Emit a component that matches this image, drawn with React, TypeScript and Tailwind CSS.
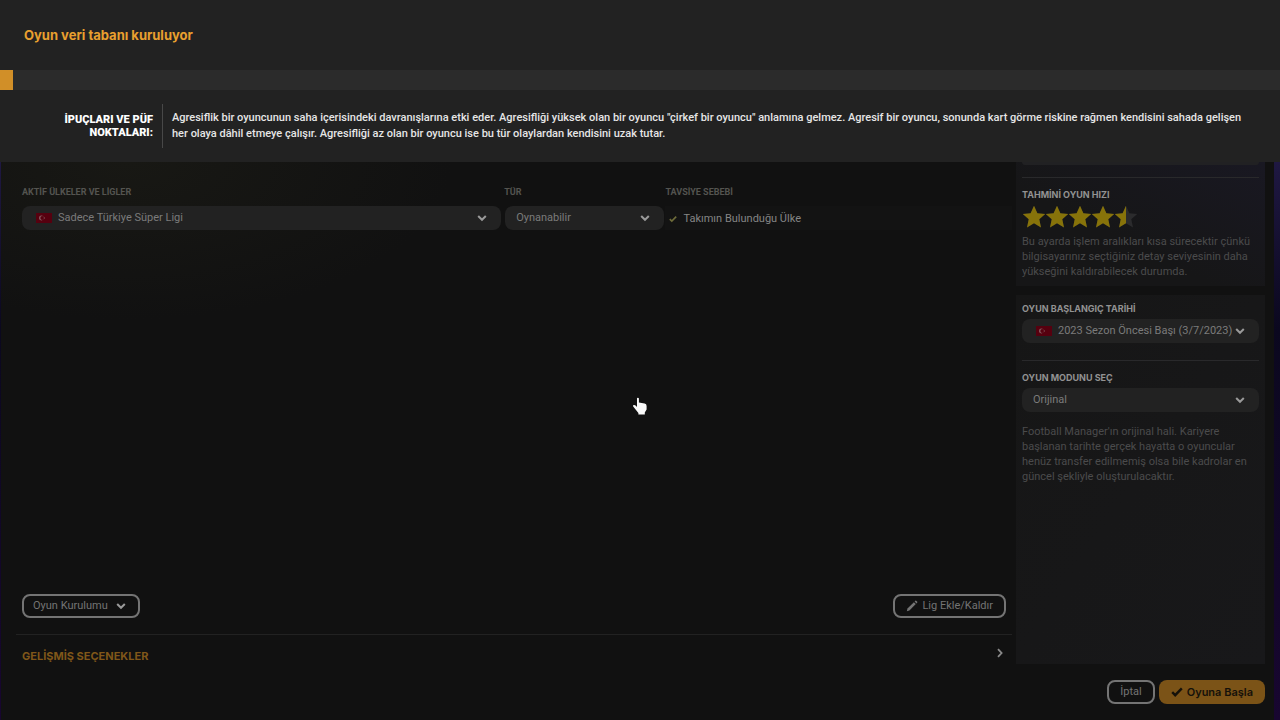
import React from 'react';
import { clsx } from 'clsx';

interface IconProps {
  className?: string;
}

const ChevronDown: React.FC<IconProps> = ({ className }) => (
  <svg viewBox="0 0 10 8" className={clsx('w-2.5 h-2 shrink-0', className)} fill="none" stroke="currentColor" strokeWidth="2">
    <path d="M1.2 2 5 5.8 8.8 2" />
  </svg>
);

const ChevronRight: React.FC<IconProps> = ({ className }) => (
  <svg viewBox="0 0 8 10" className={clsx('w-2 h-2.5 shrink-0', className)} fill="none" stroke="currentColor" strokeWidth="1.8">
    <path d="M2 1.2 5.6 5 2 8.8" />
  </svg>
);

const Tick: React.FC<IconProps> = ({ className }) => (
  <svg viewBox="0 0 12 10" className={clsx('shrink-0', className)} fill="none" stroke="currentColor" strokeWidth="2.4">
    <path d="M1.2 5.2 4.2 8.2 10.8 1.4" />
  </svg>
);

const Pencil: React.FC<IconProps> = ({ className }) => (
  <svg viewBox="0 0 12 12" className={clsx('w-3 h-3 shrink-0', className)} fill="currentColor">
    <path d="M.8 11.2 1.5 8.6 7.9 2.2 9.8 4.1 3.4 10.5Z" />
    <path d="M8.6 1.5 9.3.8Q9.9.4 10.4.9L11.1 1.6Q11.6 2.1 11.2 2.7L10.5 3.4Z" />
  </svg>
);

const TurkishFlag: React.FC = () => (
  <svg viewBox="0 0 16 10" className="w-4 h-2.5 shrink-0" aria-hidden="true">
    <rect width="16" height="10" fill="#56000f" />
    <circle cx="5.4" cy="5" r="2.4" fill="#8a6066" />
    <circle cx="6.2" cy="5" r="1.9" fill="#56000f" />
    <path d="M7.2 5 8.9 4.2V5.8Z" fill="#8a6066" />
  </svg>
);

const STAR_POINTS = '12,0.8 15.4,8.2 23.2,9 17.3,14.3 19,22.4 12,18.3 5,22.4 6.7,14.3 0.8,9 8.6,8.2';

const Stars: React.FC<{ value: number }> = ({ value }) => (
  <div role="img" aria-label={`${value} / 5`} className="flex">
    {[0, 1, 2, 3, 4].map((i) => (
      <svg key={i} viewBox="0 0 24 24" className="w-6 h-6 -mr-px" aria-hidden="true">
        <polygon points={STAR_POINTS} fill="#2b2b2d" />
        <clipPath id={`star-${i}`}>
          <rect width={24 * Math.min(1, Math.max(0, value - i))} height="24" />
        </clipPath>
        <polygon points={STAR_POINTS} fill="#87730a" clipPath={`url(#star-${i})`} />
      </svg>
    ))}
  </div>
);

interface DropdownProps {
  id: string;
  value: string;
  label?: string;
  flag?: boolean;
}

const Dropdown: React.FC<DropdownProps> = ({ id, value, label, flag }) => (
  <div className={clsx('flex items-center h-6 rounded-lg bg-[#222222] pr-3.5 text-[#7b7b7b]', flag ? 'pl-3.5' : 'pl-[11px]')}>
    {flag && <TurkishFlag />}
    <select
      id={id}
      aria-label={label}
      className={clsx('flex-1 min-w-0 appearance-none bg-transparent text-[11px] leading-4 outline-none', flag && 'ml-1.5')}
    >
      <option>{value}</option>
    </select>
    <ChevronDown className="text-[#9a9a9a]" />
  </div>
);

const outlineButton =
  'flex items-center h-6 rounded-lg border-2 border-[#747474] text-[11px] leading-4 text-[#747474]';

const LoadingBanner: React.FC = () => (
  <header className="bg-[#222222]">
    <h1 className="px-6 py-[25px] font-['Inter'] text-[13px] leading-5 font-bold text-[#e9a02f]">Oyun veri tabanı kuruluyor</h1>
    <div role="progressbar" aria-label="Oyun veri tabanı kuruluyor" aria-valuenow={1} className="h-5 bg-[#2b2b2b]">
      <div className="h-full bg-[#d18f28]" style={{ width: '1%' }} />
    </div>
    <div className="flex py-3.5 pr-3">
      <h2 className="w-[163px] shrink-0 flex items-center justify-end border-r border-[#484848] pl-12 pr-[9px] text-right text-[11px] leading-[13px] font-black text-white">
        İPUÇLARI VE PÜF NOKTALARI:
      </h2>
      <p className="pl-[9px] py-1.5 text-[11px] leading-4 font-medium text-[#e6e6e6]">
        Agresiflik bir oyuncunun saha içerisindeki davranışlarına etki eder. Agresifliği yüksek olan bir oyuncu
        "çirkef bir oyuncu" anlamına gelmez. Agresif bir oyuncu, sonunda kart görme riskine rağmen kendisini sahada gelişen
        <br />
        her olaya dâhil etmeye çalışır. Agresifliği az olan bir oyuncu ise bu tür olaylardan kendisini uzak tutar.
      </p>
    </div>
  </header>
);

const LeagueTable: React.FC = () => (
  <table className="w-full table-fixed text-left">
    <thead>
      <tr className="text-[9px] leading-3 text-[#545450]">
        <th className="w-[48.7%] p-0 pb-2 font-bold">AKTİF ÜLKELER VE LİGLER</th>
        <th className="w-[16.3%] p-0 pb-2 font-bold">TÜR</th>
        <th className="p-0 pb-2 font-bold">TAVSİYE SEBEBİ</th>
      </tr>
    </thead>
    <tbody>
      <tr>
        <td className="p-0 pr-[3px]">
          <Dropdown id="league" label="Aktif ülkeler ve ligler" value="Sadece Türkiye Süper Ligi" flag />
        </td>
        <td className="p-0 pl-px pr-px">
          <Dropdown id="type" label="Tür" value="Oynanabilir" />
        </td>
        <td className="p-0">
          <div className="flex items-center gap-1.5 h-6 pl-1 pt-0.5 bg-[#131313] text-[11px] leading-4 text-[#858585]">
            <Tick className="w-2 h-2 text-[#6e6c3a]" />
            Takımın Bulunduğu Ülke
          </div>
        </td>
      </tr>
    </tbody>
  </table>
);

const panelHeading = "font-['Inter'] text-[9px] leading-3 font-bold text-[#929292]";

const SettingsPanel: React.FC = () => (
  <aside className="w-[249px] shrink-0 flex flex-col gap-[9px] text-[11px] leading-[15px] text-[#4b4b4c]">
    <section className="bg-linear-to-bl from-[#191822] to-[#161617] to-60% px-1.5 pb-[7px]">
      <div className="h-[3px] rounded-b-lg bg-[#212123]" />
      <hr className="mt-3 border-[#29292b]" />
      <h2 className={clsx('mt-[11px]', panelHeading)}>TAHMİNİ OYUN HIZI</h2>
      <div className="mt-1 mb-[5px]">
        <Stars value={4.5} />
      </div>
      <p>Bu ayarda işlem aralıkları kısa sürecektir çünkü bilgisayarınız seçtiğiniz detay seviyesinin daha yükseğini kaldırabilecek durumda.</p>
    </section>
    <section className="flex-1 bg-linear-to-br from-[#161616] to-[#18181a] px-1.5 pt-2">
      <label htmlFor="start-date" className={clsx('block mb-1', panelHeading)}>
        OYUN BAŞLANGIÇ TARİHİ
      </label>
      <Dropdown id="start-date" value="2023 Sezon Öncesi Başı (3/7/2023)" flag />
      <hr className="mt-[17px] border-[#29292b]" />
      <label htmlFor="game-mode" className={clsx('block mt-[11px] mb-1', panelHeading)}>
        OYUN MODUNU SEÇ
      </label>
      <Dropdown id="game-mode" value="Orijinal" />
      <p className="mt-3">
        Football Manager'ın orijinal hali. Kariyere başlanan tarihte gerçek hayatta o oyuncular henüz transfer
        edilmemiş olsa bile kadrolar en güncel şekliyle oluşturulacaktır.
      </p>
    </section>
  </aside>
);

const HandCursor: React.FC = () => (
  <svg viewBox="0 0 16 20" className="absolute left-1/2 top-[397px] -ml-2 w-4 h-5 pointer-events-none" fill="#fafafa" aria-hidden="true">
    <path d="M5 1.6Q5 .8 5.9.8T6.9 1.6V5.6L12.6 6.6Q14.6 7 14.6 9V12.4L12.8 15.6V17.6H6.4V16L1.2 9.6Q.6 8.6 1.6 8 2.6 7.6 3.6 8.6L5 10Z" />
  </svg>
);

export default function App() {
  return (
    <div className="relative min-h-screen flex flex-col bg-[#111111] font-['Roboto','Liberation_Sans',sans-serif]">
      <LoadingBanner />
      <div className="flex-1 flex flex-col bg-linear-to-b from-[#1f1842] via-[#0b081f] via-30% to-[#180630] pl-px pr-[6px]">
        <div className="flex-1 flex flex-col bg-[#111111] bg-radial-[at_10%_0%] from-[#181814] to-[#111111] to-20%">
          <div className="flex-1 flex gap-1 pl-[15px] pr-[9px]">
            <main className="flex-1 min-w-0 flex flex-col">
              <div className="pl-1.5 pt-6">
                <LeagueTable />
              </div>
              <div className="mt-auto flex items-center justify-between px-1.5 pb-4">
                <button type="button" className={clsx(outlineButton, 'gap-2 pl-[9px] pr-3')}>
                  Oyun Kurulumu
                  <ChevronDown className="text-[#9a9a9a]" />
                </button>
                <button type="button" className={clsx(outlineButton, 'gap-1 px-[11px]')}>
                  <Pencil />
                  Lig Ekle/Kaldır
                </button>
              </div>
              <button type="button" className="flex items-start justify-between border-t border-[#222222] pl-1.5 pr-2 pt-[13px] text-[#8a8a8a]">
                <span className="font-['Inter'] text-[11px] leading-4 font-bold text-[#805719]">GELİŞMİŞ SEÇENEKLER</span>
                <ChevronRight />
              </button>
            </main>
            <SettingsPanel />
          </div>
          <footer className="flex justify-end gap-1 py-4 pr-[9px]">
            <button type="button" className={clsx(outlineButton, 'px-[11px]')}>İptal</button>
            <button type="button" className="flex items-center gap-1 h-6 rounded-lg bg-[#7b5317] px-3 font-['Inter'] text-[11px] leading-4 font-semibold text-[#15110a]">
              <Tick className="w-3 h-2.5" />
              Oyuna Başla
            </button>
          </footer>
        </div>
      </div>
      <HandCursor />
    </div>
  );
}
